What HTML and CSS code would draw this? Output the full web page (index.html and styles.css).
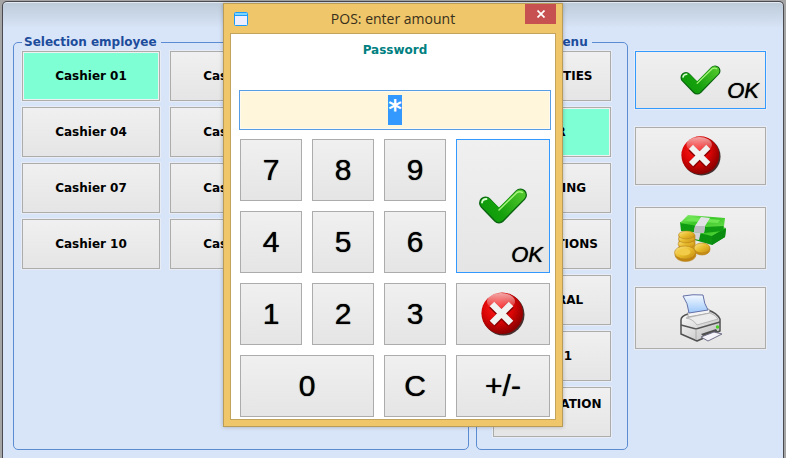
FILE: index.html
```
<!DOCTYPE html>
<html lang="en">
<head>
  <meta charset="UTF-8">
  <title>POS</title>
  <link rel="stylesheet" href="styles.css">
</head>
<body>

  <!-- Shared icons -->
  <svg class="defs" width="0" height="0" aria-hidden="true">
    <defs>
      <linearGradient id="green" gradientUnits="userSpaceOnUse" x1="4" y1="30" x2="42" y2="6">
        <stop offset="0" stop-color="#0c9a08"/>
        <stop offset="0.4" stop-color="#16a00e"/>
        <stop offset="1" stop-color="#4cc42a"/>
      </linearGradient>
      <radialGradient id="red" cx="0.4" cy="0.35" r="0.65">
        <stop offset="0" stop-color="#ff2020"/>
        <stop offset="0.55" stop-color="#dc0505"/>
        <stop offset="1" stop-color="#8c0000"/>
      </radialGradient>
      <linearGradient id="shine" x1="0" y1="0" x2="0" y2="1">
        <stop offset="0" stop-color="#fff" stop-opacity="0.65"/>
        <stop offset="1" stop-color="#fff" stop-opacity="0.05"/>
      </linearGradient>
      <linearGradient id="gold" x1="0" y1="0" x2="1" y2="1">
        <stop offset="0" stop-color="#fbe78a"/>
        <stop offset="0.5" stop-color="#e8bb2c"/>
        <stop offset="1" stop-color="#c48a10"/>
      </linearGradient>
      <linearGradient id="note" x1="0" y1="0" x2="1" y2="1">
        <stop offset="0" stop-color="#8cf070"/>
        <stop offset="0.5" stop-color="#3cc828"/>
        <stop offset="1" stop-color="#62dc48"/>
      </linearGradient>
      <linearGradient id="paper" x1="0" y1="0" x2="0" y2="1">
        <stop offset="0" stop-color="#f4f8ff"/>
        <stop offset="1" stop-color="#9cc8fa"/>
      </linearGradient>
      <linearGradient id="metal" x1="0" y1="0" x2="1" y2="1">
        <stop offset="0" stop-color="#fff"/>
        <stop offset="1" stop-color="#b8b8b8"/>
      </linearGradient>
      <symbol id="icon-check" viewBox="0 0 48 36">
        <g fill="none" stroke-linecap="round" stroke-linejoin="round">
          <path d="M6.500 15 L20 29 L41.500 7" stroke="#0a6410" stroke-width="13"/>
          <path d="M6.500 15 L20 29 L41.500 7" stroke="url(#green)" stroke-width="10"/>
          <path d="M7 15 L20 27 L41 7" stroke="url(#green)" stroke-width="11"/>
          <path d="M3 14.500 Q3.500 11 7.500 11" stroke="#d8ffd0" stroke-width="1.800"/>
          <path d="M20 22 L38 4.500 Q40.500 3 43.500 4.500" stroke="#a4f47c" stroke-width="1.500"/>
        </g>
      </symbol>
      <symbol id="icon-cancel" viewBox="0 0 44 44">
        <circle cx="22.500" cy="22.500" r="21" fill="#1c0000" opacity="0.8"/>
        <circle cx="21.200" cy="21.200" r="20.800" fill="url(#red)"/>
        <ellipse cx="20" cy="9.500" rx="14" ry="8.500" fill="url(#shine)"/>
        <path d="M11 13 L30 32 M30 13 L11 32" stroke="#8a0000" stroke-width="8"/>
        <path d="M11 12 L30 31 M30 12 L11 31" stroke="#f2f2f0" stroke-width="6.500"/>
      </symbol>
      <symbol id="icon-money" viewBox="0 0 53 48">
        <path d="M16 17 L35 12 L52 15 L51 23 L38 31 L17 25 Z" fill="#0c9410"/>
        <path d="M25 19 L45 12 L52 14 L38 22 Z" fill="url(#note)"/>
        <path d="M38 22 L52 14 L51 23 L38 31 Z" fill="#0a8c10"/>
        <path d="M16 17 L27 17 L25 26 L16 24 Z" fill="#d4d4d8"/>
        <path d="M6 8 L30 12 L50 11 L49 17 L30 19 L7 17 Z" fill="#109c12"/>
        <path d="M6 9 L14 1 L51 4 L50 12 L30 13 Z" fill="url(#note)"/>
        <path d="M11 7 L17 3 L46 6 L44 9 Z" fill="#6ee654"/>
        <path d="M27 3 L36 4 L31 12 L30 19 L20 18 L21 12 Z" fill="#e2e2e6"/>
        <path d="M21 12 L31 12 L30 19 L20 18 Z" fill="#bcbcc2"/>
        <g stroke="#b8841c" stroke-width="0.600">
          <path d="M5 21 V34 A8 4 0 0 0 21 34 V21 Z" fill="#d49c18"/>
          <ellipse cx="12.500" cy="30" rx="8.500" ry="4" fill="url(#gold)"/>
          <ellipse cx="12.500" cy="25" rx="8" ry="4" fill="url(#gold)"/>
          <ellipse cx="12.500" cy="21" rx="8" ry="4" fill="url(#gold)"/>
          <ellipse cx="28" cy="35.500" rx="8" ry="5.500" fill="#c88e12"/>
          <ellipse cx="28" cy="34" rx="8" ry="5" fill="url(#gold)"/>
          <ellipse cx="11.500" cy="41" rx="10.500" ry="6.500" fill="#c08410"/>
          <ellipse cx="11" cy="38.500" rx="10.500" ry="6.500" fill="url(#gold)"/>
        </g>
        <ellipse cx="10" cy="38" rx="6.500" ry="3.500" fill="#f2cc48"/>
      </symbol>
      <symbol id="icon-printer" viewBox="0 0 42 48">
        <path d="M1 26 Q1 22 8 20 L28 16 Q37 19 40 25 V37 L17 47 L1 40 Z" fill="url(#metal)" stroke="#505050" stroke-width="1.500" stroke-linejoin="round"/>
        <path d="M8 18 L29 15 L30 19 L8 23 Z" fill="#f4f4f4" stroke="#999" stroke-width="0.800"/>
        <path d="M3 2 Q13 0 23 1 Q24 10 28 16 L9 19 Q8 9 3 2 Z" fill="url(#paper)" stroke="#6470a8" stroke-width="1"/>
        <path d="M6 24 L30 19 Q36 21 38 25 L17 31 Q13 25 6 24 Z" fill="#ececec" stroke="#aaa" stroke-width="0.800"/>
        <path d="M1 31 L16 35 L40 28" fill="none" stroke="#555" stroke-width="1.500"/>
        <path d="M16 35 V46" stroke="#aaa" stroke-width="1"/>
        <path d="M21 40 L36 35 L38 38 L25 44 Z" fill="#505050"/>
        <path d="M21 43 L34 38 L42 40 L28 47 Z" fill="#f4f4fa" stroke="#707088" stroke-width="1"/>
        <circle cx="37.500" cy="33" r="1.700" fill="#48d020"/>
      </symbol>
    </defs>
  </svg>

  <main class="window">
    <fieldset class="group employees">
      <legend>Selection employee</legend>
      <div class="employee-grid">
        <button class="btn selected">Cashier 01</button>
        <button class="btn">Cashier 02</button>
        <button class="btn">Cashier 04</button>
        <button class="btn">Cashier 05</button>
        <button class="btn">Cashier 07</button>
        <button class="btn">Cashier 08</button>
        <button class="btn">Cashier 10</button>
        <button class="btn">Cashier 11</button>
      </div>
    </fieldset>

    <fieldset class="group menus">
      <legend>Selection menu</legend>
      <div class="menu-list">
        <button class="btn">QUANTITIES</button>
        <button class="btn selected">BAR</button>
        <button class="btn">CLEANING</button>
        <button class="btn">PROMOTIONS</button>
        <button class="btn">GENERAL</button>
        <button class="btn">BAR 1</button>
        <button class="btn">REGISTRATION<br>1</button>
      </div>
    </fieldset>

    <div class="actions">
      <button class="btn action default">
        <svg width="41" height="30"><use href="#icon-check"/></svg>
        <span class="ok">OK</span>
      </button>
      <button class="btn action" aria-label="Cancel">
        <svg width="40" height="40"><use href="#icon-cancel"/></svg>
      </button>
      <button class="btn action tall spaced" aria-label="Cash">
        <svg width="53" height="48"><use href="#icon-money"/></svg>
      </button>
      <button class="btn action tall" aria-label="Print">
        <svg width="42" height="48"><use href="#icon-printer"/></svg>
      </button>
    </div>
  </main>

  <div class="dialog" role="dialog" aria-labelledby="dialog-title">
    <div class="titlebar">
      <svg class="app-icon" width="14" height="14" viewBox="0 0 14 14">
        <rect x="0.500" y="0.500" width="13" height="13" rx="1" fill="#eeeeff" stroke="#1c9cf8"/>
        <rect x="1" y="1" width="12" height="2" fill="#7cd4ff"/>
        <rect x="1" y="3" width="12" height="1" fill="#1c9cf8"/>
      </svg>
      <span id="dialog-title">POS: enter amount</span>
      <button class="close" aria-label="Close">
        <svg width="8" height="8" viewBox="0 0 8 8"><path d="M0.500 0.500 L7.500 7.500 M7.500 0.500 L0.500 7.500" stroke="#fff" stroke-width="1.700"/></svg>
      </button>
    </div>
    <div class="dialog-body">
      <label for="amount">Password</label>
      <input type="text" id="amount" value="*" autocomplete="off">
      <div class="keypad">
        <button class="btn key">7</button>
        <button class="btn key">8</button>
        <button class="btn key">9</button>
        <button class="btn key enter default">
          <svg width="48" height="36"><use href="#icon-check"/></svg>
          <span class="ok">OK</span>
        </button>
        <button class="btn key">4</button>
        <button class="btn key">5</button>
        <button class="btn key">6</button>
        <button class="btn key">1</button>
        <button class="btn key">2</button>
        <button class="btn key">3</button>
        <button class="btn key" aria-label="Cancel">
          <svg width="44" height="44"><use href="#icon-cancel"/></svg>
        </button>
        <button class="btn key wide">0</button>
        <button class="btn key">C</button>
        <button class="btn key">+/-</button>
      </div>
    </div>
  </div>

  <script>
    const amount = document.getElementById('amount');
    amount.focus();
    amount.select();
  </script>

</body>
</html>
```
FILE: styles.css
```
* {
  box-sizing: border-box;
}
body {
  margin: 0;
  padding: 1px 2px 0;
  min-height: 100vh;
  display: flex;
  background: #a5a5a5;
  font-family: "DejaVu Sans", Verdana, sans-serif;
  font-size: 12px;
  font-weight: bold;
}
.defs {
  position: absolute;
}

/* main window */
.window {
  flex: 1;
  display: flex;
  gap: 7px;
  padding: 33px 17px 8px 10px;
  border: 1px solid #4a4a50;
  border-bottom: 0;
  border-radius: 5px 5px 0 0;
  background: linear-gradient(#bccad8, #d8e4f7 26px);
  box-shadow: inset 0 1px #e4eaf2;
}
.group {
  margin: 0;
  min-width: 0;
  padding: 2px 8px;
  border: 1px solid #5b8cd2;
  border-radius: 5px;
}
.group legend {
  padding: 0 4px 0 2px;
  line-height: 14px;
  color: #1c4c9c;
}
.employees {
  flex: 1;
}
.employee-grid {
  display: grid;
  grid-template-columns: repeat(2, 138px);
  grid-auto-rows: 50px;
  gap: 6px 10px;
}
.menus {
  width: 152px;
}
.menus legend {
  margin-left: -4px;
}
.menu-list {
  display: grid;
  grid-auto-rows: 50px;
  gap: 6px;
  padding: 0 8px;
}
.actions {
  width: 131px;
  display: flex;
  flex-direction: column;
  gap: 18px;
  padding-top: 16px;
}

.btn {
  display: grid;
  place-items: center;
  align-content: center;
  padding: 0;
  border: 1px solid #acacac;
  background: linear-gradient(#f0f0f0, #e5e5e5);
  box-shadow: 0 0 0 1px #e8edf5;
  color: #000;
  font: inherit;
  line-height: 15px;
}
.btn.selected {
  background: #7fffd4;
  box-shadow: inset 0 0 0 1px #f0f0f0, 0 0 0 1px #e8edf5;
}
.btn.default {
  border-color: #3399ff;
}
.action {
  height: 58px;
}
.action.tall {
  height: 62px;
}
.action.spaced {
  margin-top: 4px;
}

/* tick in the middle, OK in the corner of the same cell */
.action.default,
.enter {
  grid-template: 100% / 100%;
}
.action.default > *,
.enter > * {
  grid-area: 1 / 1;
}
.ok {
  place-self: end;
  padding: 0 6px 5px 0;
  font: italic 22px/24px "Liberation Sans", Arial, sans-serif;
  text-shadow: 0 0 1px #000;
}

/* password dialog */
.dialog {
  position: absolute;
  top: 3px;
  left: 50%;
  transform: translateX(-50%);
  width: 340px;
  padding: 0 6px 6px;
  border: 1px solid #b89c58;
  background: #efc669;
  box-shadow: 0 0 4px rgba(0, 0, 0, 0.25);
}
.titlebar {
  height: 29px;
  display: grid;
  grid-template-columns: 31px 1fr 31px;
  align-items: center;
  text-align: center;
  font: 14px/20px "Open Sans", "Noto Sans", sans-serif;
  color: #38301c;
}
.app-icon {
  margin-left: 4px;
}
.close {
  align-self: start;
  height: 20px;
  display: grid;
  place-items: center;
  padding: 0;
  border: 0;
  background: #c75050;
}
.dialog-body {
  display: flex;
  flex-direction: column;
  padding: 8px 4px 2px 8px;
  border: 1px solid #c4a45c;
  background: #fff;
}
.dialog-body label {
  text-align: center;
  line-height: 16px;
  color: #008080;
}
#amount {
  width: 100%;
  height: 40px;
  margin: 32px 0 9px;
  padding: 0;
  border: 1px solid #569de5;
  outline: 0;
  background: #fff6dc;
  box-shadow: inset 0 0 0 1px #fffaf0;
  text-align: center;
  font: bold 26px/33px "DejaVu Sans", Verdana, sans-serif;
}
#amount::selection {
  background: #3399ff;
  color: #fff;
}
.keypad {
  display: grid;
  grid-template-columns: repeat(3, 62px) 1fr;
  grid-auto-rows: 62px;
  gap: 10px;
  padding: 0 1px;
}
.key {
  box-shadow: none;
  font: 30px/32px "Liberation Sans", Arial, sans-serif;
  text-shadow: 0 0 1px #000;
}
.enter {
  grid-row: span 2;
}
.wide {
  grid-column: span 2;
}
```
